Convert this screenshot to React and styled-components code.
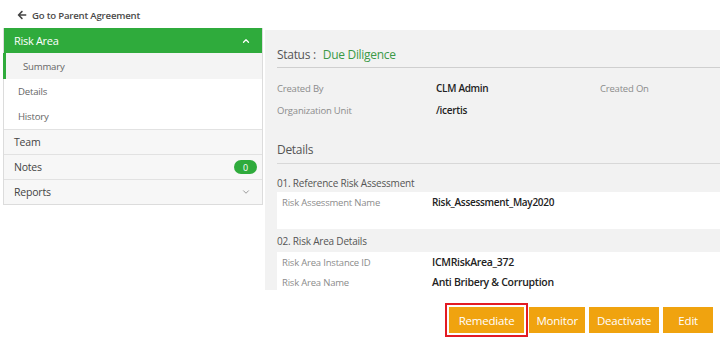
import styled, { createGlobalStyle } from 'styled-components';
import { FaArrowLeft } from 'react-icons/fa';
import { ChevronUp, ChevronDown } from 'lucide-react';

const GlobalStyle = createGlobalStyle`
  html, body {
    margin: 0;
    padding: 0;
    background: #ffffff;
    font-family: "Open Sans", "Noto Sans", sans-serif;
    color: #333;
  }
  * { box-sizing: border-box; }
`;

const Page = styled.div`
  width: 720px;
  height: 345px;
  overflow: hidden;
  padding: 0 0 0 3px;
`;

const BackLink = styled.a`
  display: flex;
  align-items: center;
  gap: 5px;
  height: 28px;
  padding: 2px 0 0 14px;
  font-size: 9.6px;
  font-weight: 600;
  color: #4a4a4a;
  text-decoration: none;
  letter-spacing: -0.2px;

  svg {
    font-size: 10px;
    color: #444;
  }
`;

const Body = styled.div`
  display: grid;
  grid-template-columns: 260px 1fr;
  gap: 2px;
  align-items: start;
`;

const Sidebar = styled.nav`
  border: 1px solid #dcdcdc;
  border-top: none;
  background: #fff;
`;

const GroupHeader = styled.div`
  display: flex;
  align-items: center;
  justify-content: space-between;
  height: 25px;
  padding: 0 11px 0 10px;
  background: #2fab3c;
  color: #fff;
  font-size: 11px;
  letter-spacing: -0.3px;
`;

const SubItem = styled.div`
  display: flex;
  align-items: center;
  height: ${({ $active }) => ($active ? '26px' : '25px')};
  padding-left: ${({ $active }) => ($active ? '17px' : '14px')};
  font-size: 9.6px;
  color: #666;
  letter-spacing: -0.2px;
  background: ${({ $active }) => ($active ? '#f4f4f4' : '#fff')};
  border-left: ${({ $active }) => ($active ? '3px solid #2fab3c' : 'none')};
  margin-left: ${({ $active }) => ($active ? '-1px' : '0')};
`;

const NavItem = styled.div`
  display: flex;
  align-items: center;
  justify-content: space-between;
  height: 25px;
  padding: 0 5px 0 10px;
  border-top: 1px solid #e2e2e2;
  background: #f7f7f7;
  font-size: 10.5px;
  color: #444;
  letter-spacing: -0.2px;

  svg {
    margin-right: 6px;
    color: #888;
  }
`;

const Badge = styled.span`
  display: inline-flex;
  align-items: center;
  justify-content: center;
  min-width: 23px;
  height: 14px;
  border-radius: 7px;
  background: #2fab3c;
  color: #fff;
  font-size: 9px;
`;

const Main = styled.section`
  margin-top: 2px;
  height: 260px;
  overflow: hidden;
  background: #f2f2f2;
  padding-left: 12px;
`;

const StatusRow = styled.div`
  display: flex;
  align-items: flex-end;
  gap: 7px;
  height: 38px;
  padding-bottom: 4px;
  border-bottom: 1px solid #cfcfcf;
  font-size: 12px;
  color: #555;
  letter-spacing: -0.3px;
`;

const StatusValue = styled.span`
  color: #3a9a47;
`;

const InfoGrid = styled.div`
  display: grid;
  grid-template-columns: 159px 164px 1fr;
  grid-auto-rows: 22px;
  align-items: center;
  padding-top: 9px;
`;

const Label = styled.span`
  font-size: 9.5px;
  color: #8c8c8c;
  letter-spacing: -0.2px;
`;

const Value = styled.span`
  font-size: ${({ $large }) => ($large ? '10.5px' : '10px')};
  font-weight: 600;
  color: #222;
  letter-spacing: -0.3px;
`;

const SectionHeading = styled.div`
  display: flex;
  align-items: flex-end;
  height: 43px;
  padding-bottom: 5px;
  border-bottom: 1px solid #d8d8d8;
  font-size: 12px;
  color: #555;
  letter-spacing: -0.3px;
`;

const GroupTitle = styled.div`
  display: flex;
  align-items: center;
  height: ${({ $first }) => ($first ? '28px' : '23px')};
  padding-top: ${({ $first }) => ($first ? '10px' : '0')};
  font-size: 10px;
  color: #555;
  letter-spacing: -0.2px;
`;

const FieldCard = styled.div`
  background: #fff;
  min-height: ${({ $height }) => $height}px;
  padding: 0 0 0 5px;
`;

const FieldRow = styled.div`
  display: grid;
  grid-template-columns: 150px 1fr;
  align-items: center;
  height: 20px;
`;

const Actions = styled.div`
  display: flex;
  justify-content: flex-end;
  gap: 4px;
  padding: 17px 7px 0 0;
`;

const ActionButton = styled.button`
  height: 26px;
  padding: 0 ${({ $pad }) => $pad}px;
  border: none;
  background: #f0a30f;
  color: #fff;
  font-family: "Open Sans", "Noto Sans", sans-serif;
  font-size: 11.5px;
  letter-spacing: -0.2px;
  cursor: pointer;
  outline: ${({ $highlight }) => ($highlight ? '2px solid #e31b23' : 'none')};
  outline-offset: 2px;
  margin-right: ${({ $highlight }) => ($highlight ? '1px' : '0')};
`;

export default function App() {
  return (
    <>
      <GlobalStyle />
      <Page>
        <BackLink href="#">
          <FaArrowLeft /> Go to Parent Agreement
        </BackLink>
        <Body>
          <Sidebar>
            <GroupHeader>
              Risk Area
              <ChevronUp size={10} strokeWidth={3} />
            </GroupHeader>
            <SubItem $active>Summary</SubItem>
            <SubItem>Details</SubItem>
            <SubItem>History</SubItem>
            <NavItem>Team</NavItem>
            <NavItem>
              Notes
              <Badge>0</Badge>
            </NavItem>
            <NavItem>
              Reports
              <ChevronDown size={10} strokeWidth={2} />
            </NavItem>
          </Sidebar>

          <Main>
            <StatusRow>
              Status :<StatusValue>Due Diligence</StatusValue>
            </StatusRow>
            <InfoGrid>
              <Label>Created By</Label>
              <Value>CLM Admin</Value>
              <Label>Created On</Label>
              <Label>Organization Unit</Label>
              <Value>/icertis</Value>
              <span />
            </InfoGrid>

            <SectionHeading>Details</SectionHeading>
            <GroupTitle $first>01. Reference Risk Assessment</GroupTitle>
            <FieldCard $height={37}>
              <FieldRow>
                <Label>Risk Assessment Name</Label>
                <Value>Risk_Assessment_May2020</Value>
              </FieldRow>
            </FieldCard>
            <GroupTitle>02. Risk Area Details</GroupTitle>
            <FieldCard $height={60}>
              <FieldRow>
                <Label>Risk Area Instance ID</Label>
                <Value $large>ICMRiskArea_372</Value>
              </FieldRow>
              <FieldRow>
                <Label>Risk Area Name</Label>
                <Value $large>Anti Bribery &amp; Corruption</Value>
              </FieldRow>
            </FieldCard>
          </Main>
        </Body>

        <Actions>
          <ActionButton $pad={10} $highlight>Remediate</ActionButton>
          <ActionButton $pad={7}>Monitor</ActionButton>
          <ActionButton $pad={8}>Deactivate</ActionButton>
          <ActionButton $pad={15}>Edit</ActionButton>
        </Actions>
      </Page>
    </>
  );
}
